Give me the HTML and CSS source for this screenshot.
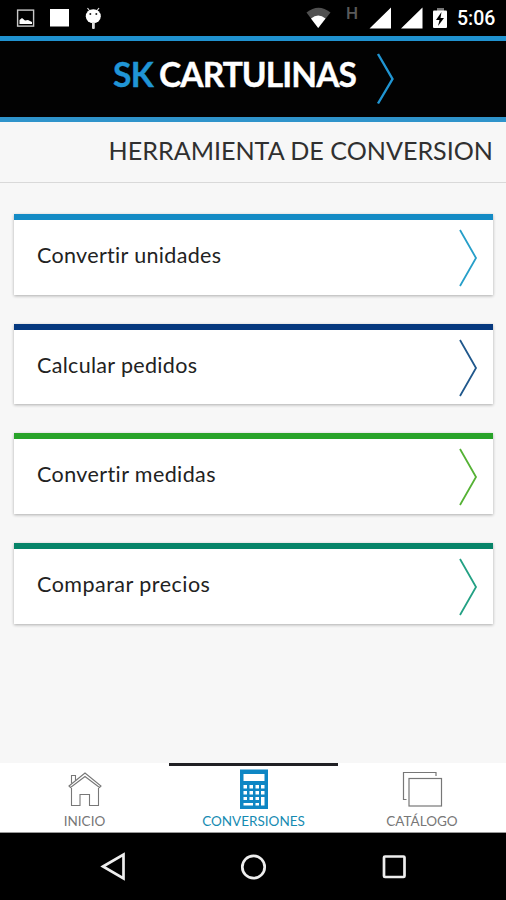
FILE: index.html
```html
<!DOCTYPE html>
<html lang="es">
<head>
<meta charset="utf-8">
<title>SK Cartulinas</title>
<link rel="stylesheet" href="styles.css">
</head>
<body>
<div class="app">
  <div class="status">
    <svg class="status-left" width="120" height="36" viewBox="0 0 120 36">
      <rect x="17.6" y="10.1" width="16" height="16" fill="none" stroke="#c8c8c8" stroke-width="1.4"/>
      <path d="M19.5 24v-4l2.5-2 3 2.500 3-.5 4 2V24z" fill="#fff"/>
      <rect x="50" y="9" width="19" height="17.500" fill="#fff"/>
      <path d="M87.500 8l3 4M99 8l-3 4" stroke="#ddd" stroke-width="1.200"/>
      <ellipse cx="93.300" cy="16.300" rx="7.500" ry="7" fill="#fff"/>
      <rect x="92" y="22" width="2.800" height="7" rx="1" fill="#ddd"/>
      <circle cx="90.300" cy="14" r="1" fill="#222"/><circle cx="96.300" cy="14" r="1" fill="#222"/>
    </svg>
    <div class="status-right">
      <svg width="28" height="36" viewBox="306 0 28 36">
        <path d="M306.500 12.500Q318.500 3 330.500 12.500L318.200 28z" fill="#505050"/>
        <path d="M311 18.500Q318.300 12.500 325.500 18.500L318.200 28z" fill="#fff"/>
      </svg>
      <span class="network">H</span>
      <svg width="86" height="36" viewBox="366 0 86 36">
        <path d="M369.500 28.500L391 7.500V28.500zM401 28.500L422.500 7.500V28.500z" fill="#fff"/>
        <path d="M437 8h7v3h-7z" fill="#777"/>
        <rect x="433" y="10.500" width="14" height="17.500" rx="1" fill="#fff"/>
        <path d="M441.500 12l-5.500 8h3.500l-1.500 6 6-8h-3.500z" fill="#000"/>
      </svg>
      <span class="clock">5:06</span>
    </div>
  </div>
  <header class="brand">
    <span class="brand-sk">SK</span><span class="brand-name">CARTULINAS</span>
    <svg class="brand-chevron" width="20" height="52" viewBox="0 0 20 52"><path d="M2 1L16.500 26L2 50.500" fill="none" stroke="#2095d2" stroke-width="2.400"/></svg>
  </header>
  <h1 class="title"><span>HERRAMIENTA DE CONVERSION</span></h1>
  <main class="tools">
    <a class="tool sky"><span class="t1">Convertir unidades</span><svg width="20" height="58" viewBox="0 0 20 58"><path d="M2 1L18 29L2 57"/></svg></a>
    <a class="tool navy"><span class="t2">Calcular pedidos</span><svg width="20" height="58" viewBox="0 0 20 58"><path d="M2 1L18 29L2 57"/></svg></a>
    <a class="tool green"><span class="t3">Convertir medidas</span><svg width="20" height="58" viewBox="0 0 20 58"><path d="M2 1L18 29L2 57"/></svg></a>
    <a class="tool teal"><span class="t4">Comparar precios</span><svg width="20" height="58" viewBox="0 0 20 58"><path d="M2 1L18 29L2 57"/></svg></a>
  </main>
  <nav class="tabs">
    <a class="tab">
      <svg width="40" height="42" viewBox="65 768 40 42" fill="none" stroke="#777" stroke-width="1.100">
        <path d="M71.500 788V805.500H80V794.500H89.500V805.500H98.500V788"/>
        <path d="M69 786L85 773L101 786L99.500 787.500L85 776.500L70.500 787.500z"/>
        <path d="M71.500 783.500V775.500H75.500V780.500"/>
      </svg>
      <span>INICIO</span>
    </a>
    <a class="tab active">
      <svg width="40" height="42" viewBox="233.500 768 40 42">
        <rect x="239.500" y="769.500" width="28" height="39.500" fill="#0e86c4"/>
        <path d="M243 774h21v7H243z" fill="#fff"/>
        <path fill="#fff" d="M243 785h3.500v3.500h-3.500zM249 785h3.500v3.500h-3.500zM255 785h3.500v3.500h-3.500zM260.500 785h3.500v3.500h-3.500zM243 791h3.500v3.500h-3.500zM249 791h3.500v3.500h-3.500zM255 791h3.500v3.500h-3.500zM260.500 791h3.500v3.500h-3.500zM243 797h3.500v3h-3.500zM249 797h3.500v3h-3.500zM255 797h3.500v3h-3.500zM260.500 797h3.500v8.500h-3.500zM243 803h9.500v2.500h-9.500zM255 803h3.500v2.500h-3.500z"/>
      </svg>
      <span>CONVERSIONES</span>
    </a>
    <a class="tab">
      <svg width="42" height="42" viewBox="401 768 42 42" fill="none" stroke="#777" stroke-width="1.200">
        <path d="M406.500 799.500H403.500V772.500H436V776"/>
        <rect x="409" y="778.500" width="32.500" height="27.500"/>
      </svg>
      <span>CATÁLOGO</span>
    </a>
  </nav>
  <div class="system">
    <svg width="32" height="34" viewBox="97 850 32 34"><path d="M103 866.500L123.500 854.500V878.500z"/></svg>
    <svg width="32" height="34" viewBox="237 850 32 34"><circle cx="253.500" cy="867" r="11.200"/></svg>
    <svg width="32" height="34" viewBox="378 850 32 34"><rect x="384" y="856.500" width="20.500" height="20.500" rx="1"/></svg>
  </div>
</div>
</body>
</html>
```
FILE: styles.css
```css
* { box-sizing: border-box; }
body { margin: 0; background: #f7f7f7; font-family: Lato, "Open Sans", sans-serif; }
svg { display: block; flex: none; }
.app { width: 506px; height: 900px; display: flex; flex-direction: column; overflow: hidden; }
.status { height: 36px; flex: none; background: #000; display: flex; justify-content: space-between; }
.status-right { display: flex; color: #fff; font-family: Roboto, sans-serif; }
.network { width: 32px; padding: 5px 0 0 12px; font-size: 17px; line-height: 17px; font-weight: 500; color: #5a5a5a; }
.clock { width: 54px; padding-left: 5px; font-size: 19.5px; line-height: 38px; font-weight: 500; white-space: nowrap; }
.brand { height: 86px; flex: none; background: #020202; border-top: 5px solid #2092cf; border-bottom: 5px solid #2f94cb; display: flex; padding-left: 113px; color: #fff; font-size: 33.5px; line-height: 66px; font-weight: 700; -webkit-text-stroke: .4px currentColor; }
.brand-sk { width: 46px; color: #2095d6; letter-spacing: -0.7px; }
.brand-name { width: 217px; letter-spacing: -0.9px; }
.brand-chevron { margin-top: 12px; }
.title { height: 61px; flex: none; margin: 0; padding-right: 13px; border-bottom: 1px solid #d9d9d9; text-align: right; font-size: 25.1px; line-height: 56px; font-weight: 400; color: #303030; white-space: nowrap; }
.tools { flex: 1; padding: 31px 13px 0 14px; display: flex; flex-direction: column; gap: 29.2px; }
.tool { height: 80.5px; flex: none; display: flex; justify-content: space-between; padding: 9px 15px 0 23px; background: #fff; border-top: 6px solid; box-shadow: 0 1px 3px rgba(0,0,0,.3); }
.tool span { font-size: 21.5px; line-height: 52px; color: #222; white-space: nowrap; }
.t1 { letter-spacing: .33px; }
.t2 { letter-spacing: .32px; }
.t3 { letter-spacing: .4px; }
.t4 { letter-spacing: .48px; }
.tool path { fill: none; stroke: currentColor; stroke-width: 1.8; }
.sky { border-color: #148bc5; }
.navy { border-color: #06397f; }
.green { border-color: #28a329; }
.teal { border-color: #078469; }
.sky svg { color: #279fc9; }
.navy svg { color: #20588c; }
.green svg { color: #55b235; }
.teal svg { color: #23a184; }
.tabs { height: 70px; flex: none; display: grid; grid-template-columns: 169px 169px 168px; background: #fff; border-bottom: 1px solid #999; }
.tab { display: flex; flex-direction: column; align-items: center; border-top: 3px solid transparent; padding-top: 2px; color: #777; font-size: 13.5px; line-height: 22px; }
.tab.active { border-color: #202024; color: #168bb2; }
.system { height: 67px; flex: none; display: flex; justify-content: center; gap: 108.5px; padding-top: 17px; background: #000; }
.system svg { fill: none; stroke: #eee; stroke-width: 2.7; }
```
